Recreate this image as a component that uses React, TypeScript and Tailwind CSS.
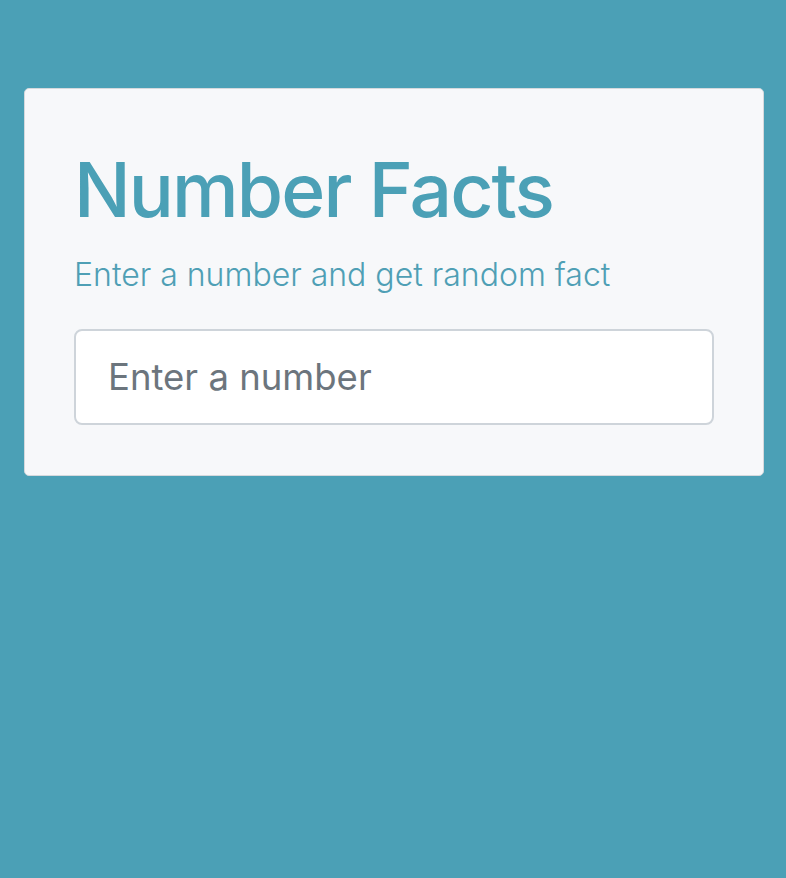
export default function App() {
  return (
    <div className="min-h-[878px] bg-[#4ba0b6] pt-[88px] pl-[24px] pr-[22px] font-['Inter',sans-serif]">
      <div className="rounded-[5px] border border-[#d5d9dd] bg-[#f7f8fa] px-[49px] pt-[56px] pb-[50px]">
        <h1 className="text-[75px] font-medium leading-[1.2] tracking-[-0.025em] text-[#4ba0b6]">
          Number Facts
        </h1>
        <p className="mt-[21px] text-[32px] font-light leading-[1.2] text-[#4f9fb5]">
          Enter a number and get random fact
        </p>
        <input
          type="text"
          placeholder="Enter a number"
          className="mt-[35px] block h-[96px] w-full rounded-[8px] border-2 border-[#ced4da] bg-white px-[32px] text-[36.5px] text-[#495057] placeholder:text-[#6c757d] outline-none"
        />
      </div>
    </div>
  );
}
